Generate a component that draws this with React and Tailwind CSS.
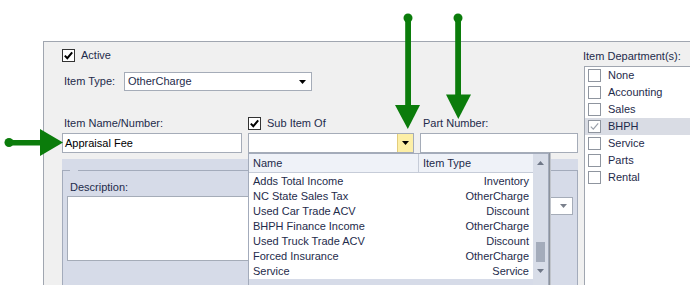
import React from 'react';

const DEPARTMENTS = ['None', 'Accounting', 'Sales', 'BHPH', 'Service', 'Parts', 'Rental'];

const ITEMS = [
  { name: 'Adds Total Income', type: 'Inventory' },
  { name: 'NC State Sales Tax', type: 'OtherCharge' },
  { name: 'Used Car Trade ACV', type: 'Discount' },
  { name: 'BHPH Finance Income', type: 'OtherCharge' },
  { name: 'Used Truck Trade ACV', type: 'Discount' },
  { name: 'Forced Insurance', type: 'OtherCharge' },
  { name: 'Service', type: 'Service' },
];

function Check({ checked, light }) {
  return (
    <span
      className={
        light
          ? 'w-[13px] h-[13px] shrink-0 bg-white border border-[#8f959f] flex items-center justify-center'
          : 'w-[13px] h-[13px] shrink-0 bg-white border border-[#333] flex items-center justify-center'
      }
    >
      {checked && (
        <svg width="11" height="11" viewBox="0 0 11 11">
          <path
            d="M1.8 5.6 L4.3 8.2 L9.2 2.4"
            fill="none"
            stroke={light ? '#9aa0aa' : '#000'}
            strokeWidth={light ? 1.2 : 2}
          />
        </svg>
      )}
    </span>
  );
}

function Tri({ color = '#000', up }) {
  return (
    <svg width="7" height="4" viewBox="0 0 7 4">
      <path d={up ? 'M0 4 L3.5 0 L7 4 Z' : 'M0 0 L7 0 L3.5 4 Z'} fill={color} />
    </svg>
  );
}

function Arrows() {
  const g = '#0b7c0b';
  return (
    <svg className="absolute inset-0 pointer-events-none z-20" width="690" height="285">
      {/* left arrow */}
      <circle cx="9" cy="142.5" r="4.5" fill={g} />
      <rect x="9" y="140" width="33" height="5.5" fill={g} />
      <path d="M40 129 L63 142.5 L40 156 Z" fill={g} />
      {/* sub item arrow */}
      <circle cx="408" cy="18" r="4.5" fill={g} />
      <rect x="405.2" y="18" width="5.8" height="89" fill={g} />
      <path d="M395 105 L420 105 L407.8 129 Z" fill={g} />
      {/* part number arrow */}
      <circle cx="458" cy="18" r="4.5" fill={g} />
      <rect x="455.2" y="18" width="5.8" height="78" fill={g} />
      <path d="M446 94.5 L471 94.5 L458.3 119 Z" fill={g} />
    </svg>
  );
}

function Dropdown() {
  return (
    <div className="absolute left-[248px] top-[153px] w-[301px] h-[140px] z-10 border border-[#a3abbb] bg-white flex shadow-[1px_0_0_#8d939c,2px_0_0_#c0c4cb]">
      <div className="w-[284px] flex flex-col">
        <div className="h-[19px] flex border-b border-[#c6ccd8] bg-[#eff2f8]">
          <div className="w-[170px] pl-[4px] border-r border-[#c6ccd8] flex items-center">Name</div>
          <div className="flex-1 pl-[4px] flex items-center">Item Type</div>
        </div>
        <div className="pt-px">
          {ITEMS.map((it) => (
            <div key={it.name} className="h-[15px] px-[4px] flex items-center justify-between">
              <span>{it.name}</span>
              <span>{it.type}</span>
            </div>
          ))}
        </div>
        <div className="flex-1 bg-[#d6dbe8]" />
      </div>
      <div className="w-[15px] bg-[#d8dde8] flex flex-col items-center">
        <div className="h-[17px] flex items-center justify-center">
          <Tri color="#6f7787" up />
        </div>
        <div className="h-[71px]" />
        <div className="w-[9px] h-[20px] bg-[#a4acbb]" />
        <div className="h-[2px]" />
        <div className="h-[14px] flex items-center justify-center">
          <Tri color="#6f7787" />
        </div>
      </div>
    </div>
  );
}

export default function App() {
  return (
    <div className="relative w-[690px] h-[285px] overflow-hidden bg-white font-['Liberation_Sans',Arial,sans-serif] text-[11px] text-[#1e2b4b]">
      <div className="mt-[41px] ml-[43px] h-[244px] border-t border-l border-[#a0a6b0] bg-[#f0f0f0] flex">
        {/* form column */}
        <div className="w-[534px] pl-[18px] flex flex-col">
          <div className="mt-[7px] h-[13px] flex items-center gap-[6px]">
            <Check checked />
            <span>Active</span>
          </div>

          <div className="mt-[10px] h-[19px] flex items-center">
            <div className="w-[62px] pl-[2px]">Item Type:</div>
            <div className="w-[188px] h-[19px] bg-white border border-[#a5acb8] flex items-center pl-[3px]">
              <span>OtherCharge</span>
              <span className="ml-auto mr-[5px] flex">
                <Tri />
              </span>
            </div>
          </div>

          <div className="mt-[25px] h-[14px] flex items-center">
            <div className="w-[180px] pl-[2px]">Item Name/Number:</div>
            <div className="ml-[6px] w-[166px] flex items-center gap-[6px]">
              <Check checked />
              <span>Sub Item Of</span>
            </div>
            <div className="ml-[6px] pl-[3px]">Part Number:</div>
          </div>

          <div className="mt-[3px] h-[20px] flex">
            <div className="w-[180px] h-[20px] bg-white border border-[#a5acb8] pl-[2px] flex items-center text-black">
              Appraisal Fee
            </div>
            <div className="ml-[6px] w-[166px] h-[20px] bg-white border border-[#a5acb8] flex justify-end">
              <div className="w-[16px] h-full bg-[#fdefa6] border-l border-[#e3cd7c] flex items-center justify-center">
                <Tri />
              </div>
            </div>
            <div className="ml-[6px] w-[158px] h-[20px] bg-white border border-[#a5acb8]" />
          </div>

          <div className="mt-[6px] w-[516px] flex-1 bg-[#d6dbe8] pt-[11px] flex flex-col">
            <div className="flex-1 border-l border-r border-[#a3abbb] flex flex-col">
              <div className="flex h-px">
                <div className="w-[7px] bg-[#a3abbb]" />
                <div className="w-[8px]" />
                <div className="flex-1 bg-[#a3abbb]" />
              </div>
              <div className="px-[4px] flex flex-col">
                <div className="mt-[9px] h-[15px] leading-[15px] pl-[3px]">Description:</div>
                <div className="mt-px flex items-start">
                  <div className="w-[340px] h-[65px] bg-white border border-[#a5acb8]" />
                  <div className="ml-auto mt-px w-[150px] h-[18px] bg-white border border-[#a5acb8] flex items-center justify-end pr-[5px]">
                    <Tri color="#7a808c" />
                  </div>
                </div>
              </div>
            </div>
          </div>
        </div>

        {/* departments column */}
        <div className="flex-1 flex flex-col pl-[5px] pt-[7px]">
          <div className="h-[15px] leading-[15px]">Item Department(s):</div>
          <div className="mt-[2px] ml-px flex-1 bg-white border-t border-l border-[#a0a6b0]">
            {DEPARTMENTS.map((d) => (
              <div
                key={d}
                className={
                  d === 'BHPH'
                    ? 'h-[17px] pl-[3px] flex items-center gap-[7px] bg-[#d9dce4]'
                    : 'h-[17px] pl-[3px] flex items-center gap-[7px]'
                }
              >
                <Check checked={d === 'BHPH'} light />
                <span>{d}</span>
              </div>
            ))}
          </div>
        </div>
      </div>

      <Dropdown />
      <Arrows />
    </div>
  );
}
